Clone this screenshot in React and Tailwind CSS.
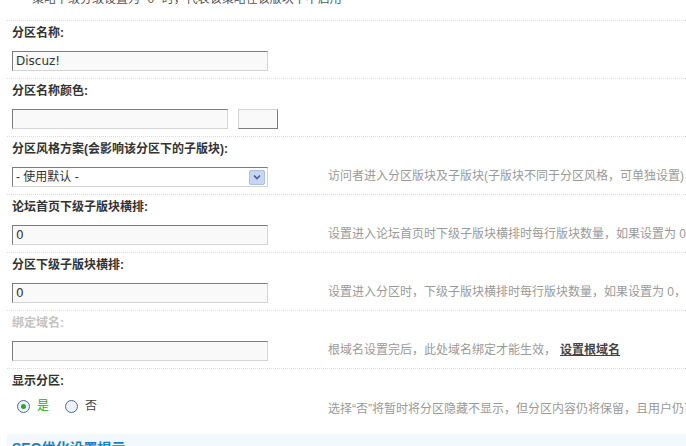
import { useState } from "react";

const font = "font-['Liberation_Sans','Noto_Sans_CJK_SC',sans-serif]";

function TextInput({ value, width = "w-[256px]" }) {
  return (
    <div
      className={`${width} h-[20px] bg-[#f9f9f9] border border-t-[#7c7c7c] border-l-[#7c7c7c] border-r-[#d4d4d4] border-b-[#d4d4d4] px-[3px] text-[12px] leading-[18px] text-[#333] font-['DejaVu_Sans','Noto_Sans_CJK_SC',sans-serif]`}
    >
      {value}
    </div>
  );
}

function Row({ label, muted, children, tip }) {
  return (
    <div className="border-t border-dotted border-[#dcdcdc]">
      <div className={`h-[29px] pl-[5px] pt-[5px] text-[12px] leading-[15px] font-bold ${muted ? "text-[#c4c4c4]" : "text-[#333]"}`}>
        {label}
      </div>
      <div className="h-[28px] flex items-start">
        <div className="w-[321px] pl-[5px] pt-[1px] shrink-0">{children}</div>
        <div className="pt-[3px] text-[12px] leading-[15px] text-[#9a9a9a] whitespace-nowrap">{tip}</div>
      </div>
    </div>
  );
}

export default function App() {
  const [show, setShow] = useState(true);

  return (
    <div className={`w-[686px] h-[446px] overflow-hidden bg-white ${font}`}>
      <div className="h-[20px] relative pl-[7px]">
        <div className="absolute left-[32px] top-[-8px] text-[12px] leading-[15px] text-[#555] whitespace-nowrap">
          策略下级分级设置为 "0" 时，代表该策略在该版块下不启用
        </div>
      </div>
      <div className="pl-[7px]">
        <Row label="分区名称:">
          <TextInput value="Discuz!" />
        </Row>
        <Row label="分区名称颜色:">
          <div className="flex gap-[10px]">
            <TextInput value="" width="w-[216px]" />
            <div className="w-[40px] h-[20px] bg-[#f9f9f9] border border-t-[#d4d4d4] border-l-[#d4d4d4] border-r-[#7c7c7c] border-b-[#7c7c7c]" />
          </div>
        </Row>
        <Row label="分区风格方案(会影响该分区下的子版块):" tip="访问者进入分区版块及子版块(子版块不同于分区风格，可单独设置)">
          <div className="w-[256px] h-[20px] bg-white border border-t-[#7c7c7c] border-l-[#7c7c7c] border-r-[#d4d4d4] border-b-[#d4d4d4] flex items-center justify-between pl-[3px] pr-[2px]">
            <span className="text-[12px] leading-[15px] text-[#333]">- 使用默认 -</span>
            <span className="w-[16px] h-[15px] rounded-[2px] bg-[#c5d6f5] border border-[#a9bfe8] flex items-center justify-center">
              <svg width="8" height="6" viewBox="0 0 8 6">
                <path d="M1 1.5 L4 4.5 L7 1.5" fill="none" stroke="#4b5f8a" strokeWidth="1.6" />
              </svg>
            </span>
          </div>
        </Row>
        <Row label="论坛首页下级子版块横排:" tip="设置进入论坛首页时下级子版块横排时每行版块数量，如果设置为 0，则按正常方式排列">
          <TextInput value="0" />
        </Row>
        <Row label="分区下级子版块横排:" tip="设置进入分区时，下级子版块横排时每行版块数量，如果设置为 0，则按正常方式排列">
          <TextInput value="0" />
        </Row>
        <Row
          label="绑定域名:"
          muted
          tip={
            <span>
              根域名设置完后，此处域名绑定才能生效，
              <span className="ml-[4px] font-bold text-[#444] underline">设置根域名</span>
            </span>
          }
        >
          <TextInput value="" />
        </Row>
        <div className="border-t border-dotted border-[#dcdcdc]">
          <div className="h-[29px] pl-[5px] pt-[5px] text-[12px] leading-[15px] font-bold text-[#333]">显示分区:</div>
          <div className="h-[36px] flex items-start">
            <div className="w-[321px] pl-[10px] pt-[1px] shrink-0 flex items-center gap-[7px] text-[12px] leading-[15px]">
              <button onClick={() => setShow(true)} className="flex items-center gap-[7px]">
                <span className="w-[13px] h-[13px] rounded-full border border-[#4f6a8a] bg-[#eef2f6] flex items-center justify-center">
                  {show && <span className="w-[5px] h-[5px] rounded-full bg-[#2fa52f]" />}
                </span>
                <span className={show ? "text-[#22b022]" : "text-[#444]"}>是</span>
              </button>
              <button onClick={() => setShow(false)} className="ml-[9px] flex items-center gap-[7px]">
                <span className="w-[13px] h-[13px] rounded-full border border-[#4f6a8a] bg-[#eef2f6] flex items-center justify-center">
                  {!show && <span className="w-[5px] h-[5px] rounded-full bg-[#2fa52f]" />}
                </span>
                <span className={!show ? "text-[#22b022]" : "text-[#444]"}>否</span>
              </button>
            </div>
            <div className="pt-[4px] text-[12px] leading-[15px] text-[#9a9a9a] whitespace-nowrap">
              选择“否”将暂时将分区隐藏不显示，但分区内容仍将保留，且用户仍可通过 fid 直接访问到此分区及版块
            </div>
          </div>
        </div>
        <div className="bg-[#f2f8fd] h-[20px] pl-[5px] pt-[6px]">
          <div className="text-[14px] leading-[16px] font-bold text-[#1b80c0]">SEO优化设置提示</div>
        </div>
      </div>
    </div>
  );
}
